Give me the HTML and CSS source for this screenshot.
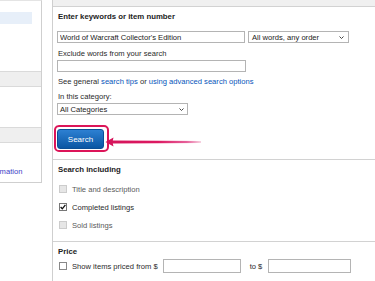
FILE: index.html
```html
<!DOCTYPE html>
<html>
<head>
<meta charset="utf-8">
<link rel="stylesheet" href="styles.css">
</head>
<body>
<div class="page">
  <aside class="side">
    <div class="side-hl"></div>
    <div class="side-band band1"></div>
    <div class="side-band band2"></div>
    <div class="side-link"><a>information</a></div>
  </aside>
  <main class="main">
    <div class="main-head"><span>Find items</span></div>
    <section class="sec sec-kw">
      <div class="h h-kw">Enter keywords or item number</div>
      <div class="kw-row">
        <input class="in kw" value="World of Warcraft Collector's Edition">
        <div class="sel sel-order"><span>All words, any order</span><svg class="chev" width="5" height="3" viewBox="0 0 5 3"><polyline points="0.5,0.5 2.5,2.5 4.5,0.5" fill="none" stroke="#444" stroke-width="1"/></svg></div>
      </div>
      <div class="lbl ex-lbl">Exclude words from your search</div>
      <input class="in ex" value="">
      <div class="lbl links">See general <a>search tips</a> or <a>using advanced search options</a></div>
      <div class="lbl cat-lbl">In this category:</div>
      <div class="sel sel-cat"><span>All Categories</span><svg class="chev" width="5" height="3" viewBox="0 0 5 3"><polyline points="0.5,0.5 2.5,2.5 4.5,0.5" fill="none" stroke="#444" stroke-width="1"/></svg></div>
      <div class="btn-row">
        <span class="btn-ring"><span class="btn">Search</span></span>
        <svg class="arrow" width="100" height="10" viewBox="0 0 100 10">
          <defs>
            <linearGradient id="ag" x1="0" y1="0" x2="1" y2="0">
              <stop offset="0" stop-color="#d5135a"/>
              <stop offset="0.55" stop-color="#dc1961"/>
              <stop offset="0.85" stop-color="#e6609a"/>
              <stop offset="1" stop-color="#f7d3e1"/>
            </linearGradient>
          </defs>
          <path d="M0.5,5 L8.5,0.6 L7.8,3.4 L96,4.1 L96,5.9 L7.8,6.6 L8.5,9.4 Z" fill="url(#ag)"/>
        </svg>
      </div>
    </section>
    <section class="sec sec-inc">
      <div class="h">Search including</div>
      <div class="cb-list">
        <div class="cb-row dis"><span class="cb cb-dis"></span><span>Title and description</span></div>
        <div class="cb-row"><span class="cb cb-on"><svg width="6" height="6" viewBox="0 0 6 6"><polyline points="0.6,3 2.3,4.8 5.4,0.8" fill="none" stroke="#111" stroke-width="1.3"/></svg></span><span>Completed listings</span></div>
        <div class="cb-row dis"><span class="cb cb-dis"></span><span>Sold listings</span></div>
      </div>
    </section>
    <section class="sec sec-price">
      <div class="h">Price</div>
      <div class="price-row">
        <span class="cb cb-off"></span>
        <span>Show items priced from $</span>
        <input class="in pr pr1" value="">
        <span class="to">to $</span>
        <input class="in pr pr2" value="">
      </div>
    </section>
  </main>
</div>
</body>
</html>
```
FILE: styles.css
```css
html, body {
  margin: 0;
  padding: 0;
  background: #fff;
  overflow: hidden;
}
body {
  font-family: "Liberation Sans", Arial, sans-serif;
  font-size: 7.6px;
  color: #2a2a2a;
}
.page {
  display: flex;
  width: 375px;
  height: 281px;
}
.side {
  width: 41px;
  height: 181px;
  border-top: 1px solid #e4e4e4;
  border-right: 1px solid #cfcfcf;
  border-bottom: 1px solid #cfcfcf;
  margin-right: 10px;
  box-sizing: content-box;
  flex: none;
  overflow: hidden;
}
.side-hl {
  margin-top: 11px;
  width: 32px;
  height: 12px;
  background: #e7eff9;
}
.side-band {
  height: 14px;
  background: #efefef;
  border-top: 1px solid #dadada;
  border-bottom: 1px solid #dadada;
}
.band1 { margin-top: 47px; }
.band2 { margin-top: 40px; }
.side-link {
  margin-top: 24px;
  line-height: 10px;
  white-space: nowrap;
}
.side-link a {
  color: #3d3dc6;
  margin-left: -15.2px;
}
.main {
  flex: 1;
  border-left: 1px solid #cfcfcf;
  height: 281px;
}
.main-head {
  height: 6px;
  background: #f0f0f0;
  border-bottom: 1px solid #d2d2d2;
  overflow: hidden;
  padding-left: 5px;
}
.main-head span {
  display: block;
  margin-top: -7px;
  line-height: 10px;
  font-weight: bold;
  font-size: 7.8px;
  color: #666;
}
.sec {
  padding-left: 5px;
}
.h {
  margin-top: 5px;
  line-height: 10px;
  height: 10px;
  font-weight: bold;
  font-size: 7.8px;
  color: #222;
  white-space: nowrap;
}
.lbl {
  line-height: 10px;
  height: 10px;
  white-space: nowrap;
}
.in {
  display: block;
  box-sizing: border-box;
  height: 12px;
  margin: 0;
  padding: 0 2px;
  border: 1px solid #b4b4b4;
  border-radius: 0;
  font-family: "Liberation Sans", Arial, sans-serif;
  font-size: 7.6px;
  color: #222;
  background: #fff;
  outline: none;
}
.kw-row {
  display: flex;
  margin-top: 9px;
  height: 12px;
}
.kw {
  width: 188px;
  margin-left: -1px;
}
.sel {
  box-sizing: border-box;
  height: 12px;
  display: flex;
  align-items: center;
  border: 1px solid #b4b4b4;
  background: #fff;
  color: #222;
  white-space: nowrap;
}
.sel-order {
  width: 101px;
  margin-left: 3px;
  padding: 0 4px 0 3px;
}
.chev {
  margin-left: auto;
  display: block;
}
.ex-lbl { margin-top: 6px; }
.ex {
  margin-top: 1px;
  width: 189px;
  margin-left: -1px;
}
.links { margin-top: 5px; }
.links a { color: #0654ba; }
.cat-lbl { margin-top: 5px; }
.sel-cat {
  margin-top: 1px;
  margin-left: -1px;
  width: 131px;
  padding: 0 3px 0 2px;
}
.btn-row {
  position: relative;
  margin-top: 10px;
  height: 27px;
}
.btn-ring {
  display: inline-block;
  margin-left: -4px;
  padding: 2px 3px 1px 1px;
  border: 2px solid #dc1559;
  border-radius: 5px;
}
.btn {
  display: flex;
  align-items: center;
  justify-content: center;
  box-sizing: border-box;
  width: 47px;
  height: 20px;
  border: 1px solid #0b4f96;
  border-radius: 3px;
  background: linear-gradient(#2d80d2, #0a56a3);
  color: #fff;
  font-size: 8px;
}
.arrow {
  position: absolute;
  left: 47px;
  top: 12px;
}
.sec-kw { padding-bottom: 7px; }
.sec-inc {
  border-top: 1px solid #d2d2d2;
  padding-bottom: 7px;
}
.cb-list { margin-top: 5px; }
.cb-row {
  display: flex;
  align-items: center;
  height: 18px;
  padding-left: 1px;
  white-space: nowrap;
}
.cb-row.dis { color: #5a5a5a; }
.cb {
  box-sizing: border-box;
  width: 8px;
  height: 8px;
  margin-right: 5px;
  flex: none;
  display: flex;
  align-items: center;
  justify-content: center;
}
.cb-dis {
  background: #e6e6e6;
  border: 1px solid #cccccc;
}
.cb-on {
  background: #fff;
  border: 1px solid #777;
}
.cb-off {
  background: #fff;
  border: 1px solid #888;
}
.sec-price {
  border-top: 1px solid #d2d2d2;
}
.price-row {
  display: flex;
  align-items: center;
  height: 14px;
  margin-top: 2px;
  padding-left: 1px;
  white-space: nowrap;
}
.pr {
  height: 14px;
}
.pr1 {
  width: 78px;
  margin-left: 5px;
}
.to { margin-left: 9px; }
.pr2 {
  width: 83px;
  margin-left: 6px;
}
```
